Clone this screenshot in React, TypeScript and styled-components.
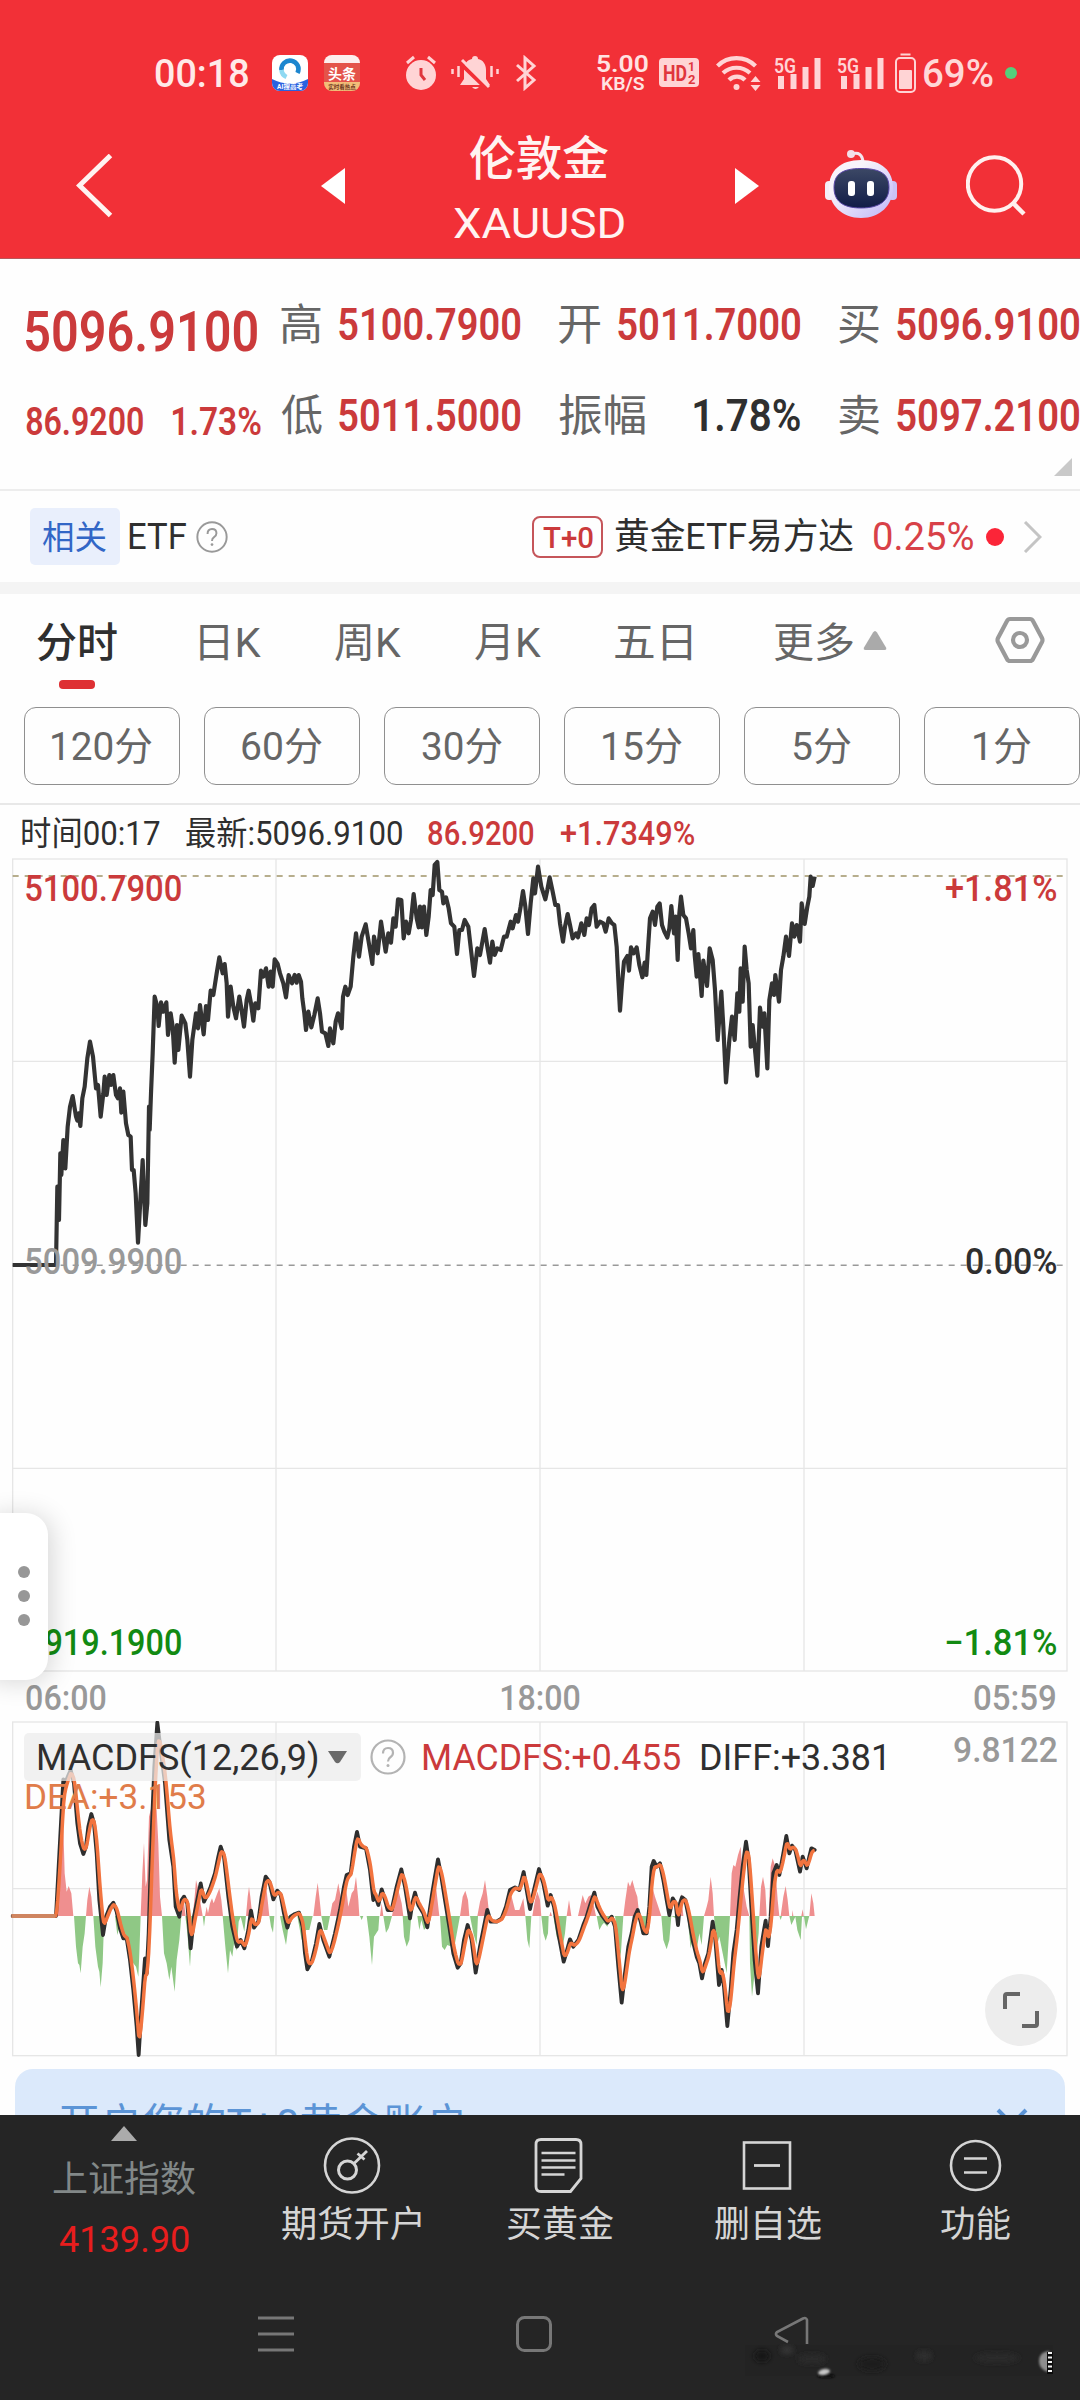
import React, { useLayoutEffect, useRef, useState } from "react";
import styled, { createGlobalStyle } from "styled-components";

const FONT = `Roboto, "Noto Sans CJK SC", sans-serif`;
const RED = "#cb3a3b";
const INK = "#2f2f2f";

const Global = createGlobalStyle`
  * { box-sizing: border-box; }
  body { margin: 0; background: #fff; font-family: ${FONT}; }
  svg { display: block; flex: none; }
`;

/* ---------- text fitted to a column width ---------- */
const FitBox = styled.span<{ $w: number; $size: number; $lh: number; $color: string; $weight: number }>`
  display: block;
  flex: none;
  width: ${(p) => p.$w}px;
  height: ${(p) => p.$lh}px;
  line-height: ${(p) => p.$lh}px;
  font-family: ${FONT};
  font-size: ${(p) => p.$size}px;
  font-weight: ${(p) => p.$weight};
  color: ${(p) => p.$color};
  white-space: pre;
`;
const FitInner = styled.span`
  display: inline-block;
  transform-origin: 0 50%;
`;

type FitProps = { w: number; size: number; lh?: number; color?: string; weight?: number; children: string };

function Fit({ w, size, lh, color = INK, weight = 400, children }: FitProps) {
  const ref = useRef<HTMLSpanElement>(null);
  const [transform, setTransform] = useState("none");
  useLayoutEffect(() => {
    const ctx = document.createElement("canvas").getContext("2d");
    if (!ctx || !ref.current) return;
    ctx.font = `${weight} ${size}px ${FONT}`;
    const m = ctx.measureText(children);
    const scale = w / (m.actualBoundingBoxRight + m.actualBoundingBoxLeft);
    setTransform(`translate(${m.actualBoundingBoxLeft * scale}px, 1px) scaleX(${scale})`);
  }, [w, size, weight, children]);
  return (
    <FitBox $w={w} $size={size} $lh={lh ?? Math.round(size * 1.2)} $color={color} $weight={weight}>
      <FitInner ref={ref} style={{ transform }}>{children}</FitInner>
    </FitBox>
  );
}

/* ---------- page ---------- */
const Page = styled.div`
  width: 1080px;
  height: 2400px;
  display: flex;
  flex-direction: column;
  overflow: hidden;
  background: #fefefe;
`;
const Row = styled.div<{ $gap?: number }>`
  display: flex;
  align-items: center;
  gap: ${(p) => p.$gap ?? 0}px;
`;
const Spacer = styled.div<{ $w: number }>`
  flex: none;
  width: ${(p) => p.$w}px;
`;

/* ---------- header ---------- */
const Header = styled.header`
  flex: none;
  height: 259px;
  background: #f23037;
  border-bottom: 1px solid #b8575a;
`;
const StatusBar = styled.div`
  height: 118px;
  padding: 27px 0 0 155px;
  display: flex;
  align-items: center;
`;
const Speed = styled.div`
  display: flex;
  flex-direction: column;
  align-items: center;
  margin-right: 11px;
`;
const GreenDot = styled.div`
  width: 12px;
  height: 12px;
  margin-left: 12px;
  border-radius: 50%;
  background: #55cf7b;
`;
const TitleBar = styled.div`
  height: 136px;
  padding-left: 76px;
  display: flex;
  align-items: center;
`;
const TitleStack = styled.div`
  width: 170px;
  height: 136px;
  padding-top: 12px;
  display: flex;
  flex-direction: column;
  align-items: center;
  gap: 10px;
`;

const PINK = "#ffd4d5";

const BrowserIcon = () => (
  <svg width="36" height="36" viewBox="0 0 36 36">
    <rect width="36" height="36" rx="8" fill="#fff" />
    <path d="M0 24q18 9 36 0v4a8 8 0 0 1-8 8H8a8 8 0 0 1-8-8z" fill="#2a62e0" />
    <path d="M9.500 15a8.500 8.500 0 1 1 16 3" fill="none" stroke="#1d86cf" strokeWidth="4.600" />
    <path d="M9.500 15a8.500 8.500 0 0 0 5 7" fill="none" stroke="#8fd9f2" strokeWidth="4.600" />
    <text x="18" y="34" fontSize="6.500" fontWeight="700" fill="#fff" textAnchor="middle" fontFamily={FONT}>AI搜高考</text>
  </svg>
);
const NewsIcon = () => (
  <svg width="36" height="36" viewBox="0 0 36 36">
    <rect width="36" height="36" rx="8" fill="#e4534a" />
    <path d="M0 8a8 8 0 0 1 8-8h20a8 8 0 0 1 8 8z" fill="#fdeeee" />
    <path d="M0 27h36v1a8 8 0 0 1-8 8H8a8 8 0 0 1-8-8z" fill="#f2bd78" />
    <text x="18" y="24" fontSize="14" fontWeight="700" fill="#fff" textAnchor="middle" fontFamily={FONT}>头条</text>
    <text x="18" y="34" fontSize="5.500" fontWeight="700" fill="#6b3320" textAnchor="middle" fontFamily={FONT}>实时看热点</text>
  </svg>
);
const AlarmIcon = () => (
  <svg width="32" height="36" viewBox="0 0 32 36">
    <circle cx="16" cy="20" r="15" fill={PINK} />
    <path d="M2 8l7-6M30 8l-7-6" stroke={PINK} strokeWidth="3" />
    <path d="M16 13v7l4 5" fill="none" stroke="#e0363d" strokeWidth="3" />
  </svg>
);
const BellIcon = () => (
  <svg width="48" height="36" viewBox="0 0 48 36">
    <path d="M24 1c2 0 3 1 3 3 5 1 8 5 8 11v9l4 6H9l4-6v-9c0-6 3-10 8-11 0-2 1-3 3-3zM21 32h7q-3.500 4-7 0z" fill={PINK} />
    <path d="M8 7l28 27" stroke="#f23037" strokeWidth="4" />
    <path d="M11 5l27 27" stroke={PINK} strokeWidth="3" />
    <path d="M1.500 14v5M7.500 11v11M40.500 11v11M46.500 14v5" stroke={PINK} strokeWidth="2.500" />
  </svg>
);
const BluetoothIcon = () => (
  <svg width="22" height="36" viewBox="0 0 22 36">
    <path d="M2 10l17 15-9 8V3l9 8L2 26" fill="none" stroke={PINK} strokeWidth="3" />
  </svg>
);
const HdIcon = () => (
  <svg width="40" height="29" viewBox="0 0 40 29">
    <rect width="40" height="29" rx="4" fill={PINK} />
    <text x="4" y="22.500" fontSize="22" fontWeight="700" fill="#e0363d" fontFamily={FONT} textLength="24" lengthAdjust="spacingAndGlyphs">HD</text>
    <text x="29" y="13" fontSize="12" fontWeight="700" fill="#e0363d" fontFamily={FONT}>1</text>
    <text x="29" y="25.500" fontSize="13" fontWeight="700" fill="#e0363d" fontFamily={FONT}>2</text>
  </svg>
);
const WifiIcon = () => (
  <svg width="46" height="36" viewBox="0 0 46 36">
    <g fill="none" stroke={PINK} strokeWidth="4.200">
      <path d="M1.500 11a27 27 0 0 1 38 0" />
      <path d="M7 18a20 20 0 0 1 27 0" />
      <path d="M13 25a11 11 0 0 1 16 0" />
    </g>
    <circle cx="20.500" cy="32" r="3" fill={PINK} />
    <path d="M39.500 21l5 6h-10zM39.500 36l5-6h-10z" fill={PINK} />
  </svg>
);
const SignalSvg = styled.svg`
  overflow: visible;
`;
const SignalIcon = () => (
  <SignalSvg width="47" height="36" viewBox="0 0 47 36">
    <text x="0" y="17.500" fontSize="21" fontWeight="600" fill={PINK} fontFamily={FONT} textLength="22" lengthAdjust="spacingAndGlyphs">5G</text>
    <path d="M7 21v13M19.500 19v15M31.500 12v22M43.500 3v31" stroke={PINK} strokeWidth="6" />
  </SignalSvg>
);
const BatteryIcon = () => (
  <svg width="21" height="40" viewBox="0 0 21 40">
    <path d="M5.500 1.500h10" stroke={PINK} strokeWidth="2" />
    <rect x="1" y="5" width="19" height="34" rx="4" fill="none" stroke={PINK} strokeWidth="2" />
    <rect x="4" y="17" width="13" height="19" rx="1" fill={PINK} />
  </svg>
);
const BackIcon = () => (
  <svg width="37" height="64" viewBox="0 0 37 64">
    <path d="M34.500 1.500L3.500 31.500l31 30" fill="none" stroke="#fff3f1" strokeWidth="5" />
  </svg>
);
const PrevIcon = () => (
  <svg width="24" height="36" viewBox="0 0 24 36"><path d="M24 0v36L0 18z" fill="#fff" /></svg>
);
const NextIcon = () => (
  <svg width="24" height="36" viewBox="0 0 24 36"><path d="M0 0v36l24-18z" fill="#fff" /></svg>
);
const RobotIcon = () => (
  <svg width="72" height="74" viewBox="0 0 72 74">
    <defs>
      <linearGradient id="shell" x1="0" y1="0" x2="1" y2="1">
        <stop offset="0.300" stopColor="#f8f4fb" />
        <stop offset="1" stopColor="#bdb4f7" />
      </linearGradient>
      <linearGradient id="visor" x1="0" y1="0" x2="0" y2="1">
        <stop offset="0" stopColor="#3c4865" />
        <stop offset="1" stopColor="#111c48" />
      </linearGradient>
    </defs>
    <path d="M27 5q10-3 11 8" fill="none" stroke="#f3e6ee" strokeWidth="3" />
    <circle cx="26" cy="5" r="4" fill="#f3dfe8" />
    <rect x="0" y="32" width="9" height="19" rx="4" fill="#f4eef8" />
    <rect x="63" y="32" width="9" height="19" rx="4" fill="#cbc3f5" />
    <path d="M36 11c21 0 32 11 32 28S55 69 36 69 4 56 4 39 15 11 36 11z" fill="url(#shell)" />
    <path d="M36 19.500c20 0 28 6 28 19s-9 20.500-28 20.500S9 51.500 9 38.500s8-19 27-19z" fill="url(#visor)" stroke="#5948a8" strokeWidth="1" />
    <rect x="23" y="32" width="7" height="15" rx="3" fill="#fff" />
    <rect x="42" y="32" width="7" height="15" rx="3" fill="#fff" />
  </svg>
);
const SearchIcon = () => (
  <svg width="60" height="64" viewBox="0 0 60 64">
    <circle cx="28.500" cy="30" r="26.700" fill="none" stroke="#fff0ee" strokeWidth="4" />
    <path d="M47 49l11 11" stroke="#fff0ee" strokeWidth="4.500" />
  </svg>
);

/* ---------- quote ---------- */
const Quote = styled.section`
  flex: none;
  height: 232px;
  padding: 39px 0 0 26px;
  display: flex;
  border-bottom: 2px solid #ededed;
  position: relative;
`;
const PriceCol = styled.div`
  flex: none;
  width: 255px;
  display: flex;
  flex-direction: column;
  gap: 34px;
`;
const StatCol = styled.div<{ $w: number }>`
  flex: none;
  width: ${(p) => p.$w}px;
  margin-right: 39px;
  display: flex;
  flex-direction: column;
  gap: 39px;
`;
const StatRow = styled.div`
  height: 52px;
  display: flex;
  align-items: center;
  justify-content: space-between;
`;
const Corner = styled.div`
  position: absolute;
  right: 8px;
  bottom: 13px;
  border-left: 18px solid transparent;
  border-bottom: 18px solid #c9c9c9;
`;

/* ---------- related ---------- */
const Related = styled.section`
  flex: none;
  height: 103px;
  padding: 0 38px 0 30px;
  display: flex;
  align-items: center;
  border-bottom: 12px solid #f4f4f4;
`;
const BlueTag = styled.div`
  width: 90px;
  height: 57px;
  margin-right: 9px;
  padding-left: 12px;
  border-radius: 5px;
  background: #e9effc;
  display: flex;
  align-items: center;
`;
const TTag = styled.div`
  width: 71px;
  height: 42px;
  margin: 0 12px 0 auto;
  border: 2px solid #c5555a;
  border-radius: 8px;
  display: flex;
  align-items: center;
  justify-content: center;
`;
const RedDot = styled.div`
  width: 18px;
  height: 18px;
  margin: 0 19px 0 13px;
  border-radius: 50%;
  background: #fb2538;
`;
const HelpIcon = ({ size, stroke }: { size: number; stroke: string }) => (
  <svg width={size} height={size} viewBox="0 0 36 36">
    <circle cx="18" cy="18" r="16.500" fill="none" stroke={stroke} strokeWidth="2.200" />
    <path d="M13 14.500q0-5.500 5-5.500t5 4.800q0 2.700-2.700 4.400Q18 19.700 18 22.500" fill="none" stroke={stroke} strokeWidth="2.200" />
    <circle cx="18" cy="26.500" r="1.500" fill={stroke} />
  </svg>
);

/* ---------- tabs ---------- */
const Tabs = styled.nav`
  flex: none;
  height: 113px;
  padding: 0 35px 0 37px;
  display: flex;
  align-items: flex-start;
`;
const Tab = styled.div<{ $ml: number }>`
  margin-left: ${(p) => p.$ml}px;
  padding-top: 24px;
  display: flex;
  flex-direction: column;
  align-items: center;
  gap: 13px;
`;
const Underline = styled.div`
  width: 36px;
  height: 9px;
  border-radius: 4px;
  background: #de3033;
`;
const TabIcon = styled.div<{ $ml: number; $mt: number }>`
  margin: ${(p) => p.$mt}px 0 0 ${(p) => p.$ml}px;
`;
const Chips = styled.div`
  flex: none;
  height: 98px;
  padding-left: 24px;
  display: flex;
  gap: 24px;
  border-bottom: 2px solid #e8e8e8;
`;
const Chip = styled.div`
  flex: none;
  width: 156px;
  height: 78px;
  border: 1px solid #8f8f8f;
  border-radius: 12px;
  display: flex;
  align-items: center;
  justify-content: center;
`;
const InfoRow = styled.div`
  flex: none;
  height: 53px;
  padding: 3px 0 0 22px;
  display: flex;
  align-items: center;
`;

/* ---------- charts ---------- */
const PriceChart = styled.section`
  flex: none;
  height: 814px;
  display: grid;
`;
const ChartSvg = styled.svg`
  grid-area: 1 / 1;
`;
const PriceLabels = styled.div`
  grid-area: 1 / 1;
  height: 814px;
  padding: 9px 24px 8px 26px;
  display: flex;
  flex-direction: column;
  justify-content: space-between;
`;
const LabelRow = styled.div<{ $pb?: number }>`
  padding-bottom: ${(p) => p.$pb ?? 0}px;
  display: flex;
  justify-content: space-between;
  align-items: center;
`;
const TimeRow = styled.div`
  flex: none;
  height: 49px;
  padding: 3px 25px 0 26px;
  display: flex;
  align-items: center;
  justify-content: space-between;
`;
const ChartArea = styled.div`
  flex: none;
  position: relative;
`;
const Handle = styled.div`
  position: absolute;
  left: -20px;
  top: 655px;
  width: 68px;
  height: 167px;
  padding: 0 0 2px 20px;
  border-radius: 22px;
  background: #fff;
  box-shadow: 4px 2px 26px rgba(0, 0, 0, 0.16);
  display: flex;
  flex-direction: column;
  align-items: center;
  justify-content: center;
  gap: 12px;
  span {
    width: 12px;
    height: 12px;
    border-radius: 50%;
    background: #979797;
  }
`;
const Macd = styled.section`
  flex: none;
  height: 348px;
  display: grid;
`;
const MacdLabels = styled.div`
  grid-area: 1 / 1;
  height: 336px;
  padding: 12px 23px 0 24px;
  display: flex;
  flex-direction: column;
`;
const Indicator = styled.div`
  width: 337px;
  height: 48px;
  margin-right: 9px;
  padding: 0 14px;
  border-radius: 5px;
  background: rgba(236, 236, 236, 0.72);
  display: flex;
  align-items: center;
  justify-content: space-between;
`;
const LastValue = styled.div`
  margin-left: auto;
  align-self: flex-start;
`;
const Expand = styled.div`
  width: 72px;
  height: 72px;
  margin: auto 0 11px auto;
  border-radius: 50%;
  background: #ededed;
  display: flex;
  align-items: center;
  justify-content: center;
`;

type Pt = [number, number];
const parse = (s: string): Pt[] =>
  s.trim().split(/\s+/).map((p) => p.split(",").map(Number) as Pt);
const shift = (pts: Pt[], dx: number): Pt[] => pts.map(([x, y]) => [x + dx, y]);
const join = (pts: Pt[]) => pts.map((p) => p.join(",")).join(" ");

const PRICE: Pt[] = [
  ...parse(`38,1275 168,1275 172,1040 177,1140 181,940 184,1005 190,900 196,985 203,860 210,800 218,768 228,830 232,842 236,820 241,858 247,775 254,740 262,655 270,605 279,650 288,745 294,735 302,830 310,760 314,710 320,765 328,705 333,735 340,705 348,765 354,775 360,745 364,818 370,755 378,850 385,885 392,890 396,990 401,990 407,1060 414,1208 420,1100 428,960 436,1155 442,1090 447,800 449,870 453,760 458,640 464,470 472,500 476,558 483,487 490,515 499,487 504,585 512,520 518,560 524,668 531,555 535,630 545,527 556,550 562,600 570,710 577,600 588,520 594,565 600,495 611,583 618,498 624,540 632,452 640,465 650,400 658,352 668,400 674,372 680,430 684,530 692,440 700,500 708,535 718,470 724,505 732,560 740,480 746,452 753,490 760,542 766,490 775,505 783,392 790,410 798,385 806,440 812,395 818,440 824,358 833,372 840,400 850,430 858,472 866,405 876,430 884,405 890,428 896,405 903,425 907,475 913,520 918,570 925,515 934,562 943,525 953,475 960,520 966,575 976,580 985,618 990,565 1000,610 1007,545 1014,520 1025,565 1029,470 1036,440 1043,465 1052,440 1060,350 1068,280 1077,350 1085,290 1097,253 1105,300 1117,372 1122,290 1133,340 1143,245 1150,290 1157,335 1165,280 1173,308 1180,235 1187,260 1194,178 1204,180 1211,295 1218,245 1226,280 1233,240 1241,162 1250,235 1256,262`),
  ...shift(parse(`60,200 66,262 72,200 79,285 86,230 92,150 98,165 104,75 112,66 118,150 126,155 130,190 138,172 146,205 153,250 163,260 171,342 178,270 186,270 194,240 205,260 213,330 222,408 232,325 240,345 254,267 262,320 270,368 277,305 284,345 292,325 302,330 312,290 320,290 332,245 338,265 348,225 354,245 362,200 369,153 376,200 384,282 392,190 400,115 405,160 414,80 424,140 436,178 442,150 449,112 457,150 466,195 474,195 480,250 489,305 495,260 503,222 510,255 518,295 528,280 534,292 544,250 553,285 560,235 567,255 575,205 583,195 590,260 600,245 610,250 617,275 626,235 636,250 643,255 650,320 655,420 660,512 666,430 672,365 682,348 687,392 693,322 701,340 710,322 718,375 727,412 734,368 739,405 745,310 750,235 758,215 765,255 772,200 779,190 786,255 793,275 802,293 808,265 814,198 822,280 827,230 833,360 838,220 843,170 850,225 858,235 866,280 873,325 880,270 884,345 890,410 895,342 905,468 910,362 921,438 929,325 938,360 945,450 953,600 964,455 970,560 978,727 988,600 996,530 1004,600 1012,460 1018,515 1022,385 1028,485 1034,320 1040,390 1046,430 1052,620 1058,555 1066,640 1072,707 1080,503 1088,560 1093,520 1102,685 1108,480 1116,430 1122,465 1126,405 1137,485 1143,390 1150,350 1158,290 1167,348 1176,250 1183,290 1190,255 1200,305 1205,190 1214,252 1222,200 1228,170 1232,110 1238,138 1244,110`), 1200),
];

const DIFF: Pt[] = [
  ...parse(`38,648 168,648 176,500 190,238 197,245 212,210 222,250 232,370 240,430 250,462 258,440 265,380 274,342 282,370 290,460 298,600 309,705 318,650 330,620 340,608 350,635 360,685 370,715 380,715 390,780 400,870 410,980 416,1065 424,930 435,775 440,820 446,700 455,400 463,200 472,68 482,150 495,250 508,420 520,500 527,620 538,650 545,600 552,590 562,610 572,745 582,650 592,600 602,550 612,605 622,585 632,560 645,520 655,470 662,440 672,470 685,590 697,680 711,740 722,720 733,745 745,690 753,632 762,683 775,665 785,590 797,530 808,545 820,598 832,572 842,585 852,640 862,683 872,650 885,642 897,638 908,680 915,760 922,808 935,785 948,730 958,672 970,720 988,770 1005,700 1020,630 1032,560 1040,525 1052,520 1062,440 1071,396 1080,440 1098,445 1110,510 1120,600 1127,590 1135,615 1145,568 1155,600 1163,630 1175,630 1190,560 1204,508 1215,560 1230,655 1237,610`),
  ...shift(parse(`45,578 55,615 70,640 82,682 95,590 105,530 114,478 124,530 135,600 148,680 160,760 173,803 182,790 192,720 203,675 215,720 227,818 240,740 250,690 262,630 272,665 290,665 305,655 318,620 330,570 345,562 358,570 371,516 380,570 390,627 402,570 417,507 430,550 443,617 452,585 462,620 475,700 491,785 500,755 510,718 520,740 535,720 550,675 560,650 572,610 583,578 592,620 605,645 622,668 635,650 645,680 655,800 665,908 675,820 685,740 695,700 704,650 713,630 722,665 730,700 740,700 748,620 755,500 761,483 770,500 780,490 790,540 800,600 808,645 818,595 827,610 834,675 840,610 846,592 856,600 866,650 878,720 890,770 898,790 906,835 915,790 925,760 932,710 938,665 946,720 957,855 965,810 972,860 982,978 992,870 1000,760 1010,690 1018,600 1028,500 1038,425 1046,480 1054,620 1064,780 1074,880 1084,740 1092,690 1097,662 1104,738 1112,650 1120,520 1130,495 1138,525 1150,460 1159,408 1168,460 1176,437 1186,450 1200,515 1208,470 1220,505 1228,470 1234,445 1244,450`), 1200),
];

/* signal line: exponential average of DIFF */
function ema(pts: Pt[], step: number, alpha: number): Pt[] {
  const out: Pt[] = [];
  let i = 0;
  let v = pts[0][1];
  const last = pts[pts.length - 1][0];
  for (let x = pts[0][0]; x <= last; x += step) {
    while (i < pts.length - 2 && pts[i + 1][0] < x) i++;
    const [x0, y0] = pts[i];
    const [x1, y1] = pts[i + 1];
    const y = y0 + ((y1 - y0) * (x - x0)) / (x1 - x0);
    v += alpha * (y - v);
    out.push([x, Math.round(v * 10) / 10]);
  }
  return out;
}
const DEA = ema(DIFF, 3, 0.4);

const BARS_UP: Pt[] = [
  ...parse(`168,648 178,560 186,440 190,380 194,520 200,575 206,558 214,580 220,648 258,648 262,600 268,560 274,590 279,648 422,648 427,520 432,428 437,560 441,540 447,350 452,330 462,300 470,330 475,430 480,590 486,648 545,648 550,590 557,648 578,648 584,590 588,540 593,560 600,600 608,648 615,648 620,620 624,640 630,610 636,595 641,610 650,585 658,565 664,600 669,648 738,648 743,590 747,560 751,590 757,648 780,648 790,580 797,545 803,600 808,648 940,648 947,590 953,548 958,590 964,648 990,648 997,610 1005,600 1015,550 1022,590 1030,600 1037,550 1045,620 1055,580 1062,570 1068,530 1075,600 1078,648 1140,648 1145,610 1150,648 1176,648 1185,600 1195,570 1205,610 1210,648`),
  ...shift(parse(`85,648 100,600 108,560 118,648 180,648 188,590 196,572 204,600 208,648 232,648 240,605 248,580 255,540 262,590 268,648 310,648 325,590 335,590 345,630 358,630 370,595 376,648 397,648 405,600 412,575 420,600 424,648 448,648 452,635 456,648 500,648 507,600 514,648 534,648 548,585 556,610 565,590 572,585 580,610 588,648 670,648 676,600 684,545 690,560 697,540 705,570 712,590 718,648 750,648 757,560 765,590 775,620 784,648 838,648 844,580 850,648 912,648 920,620 925,600 932,530 938,580 942,648 990,648 995,520 1000,495 1006,500 1014,465 1022,440 1030,560 1040,620 1048,648 1078,648 1083,560 1089,530 1096,570 1100,648 1106,648 1112,500 1118,475 1126,500 1133,600 1138,648 1142,648 1150,590 1157,558 1163,600 1168,648 1176,648 1178,630 1180,648 1204,648 1208,628 1211,648 1228,648 1234,580 1240,610 1244,648`), 1200),
];
const BARS_DOWN: Pt[] = [
  ...parse(`222,648 228,740 234,790 238,795 242,820 248,740 254,700 258,648 280,648 286,740 294,800 298,815 302,862 308,790 311,700 318,648 345,648 352,705 358,680 365,715 375,700 390,760 400,790 408,800 415,830 418,760 422,648 486,648 492,760 500,790 508,840 514,800 524,875 530,780 538,720 544,648 556,648 562,700 570,800 576,700 582,648 608,648 612,680 616,648 668,648 676,740 684,820 690,750 697,770 702,730 710,752 716,665 722,650 726,665 733,695 738,648 808,648 813,680 819,698 823,648 840,648 848,690 858,735 864,690 868,648 892,648 905,720 918,690 928,690 938,648 964,648 972,690 982,690 990,648 1080,648 1085,660 1090,648 1100,648 1108,710 1116,795 1122,710 1135,690 1138,648 1150,648 1158,698 1166,685 1176,648`),
  ...shift(parse(`8,648 12,710 20,740 28,720 34,648 52,648 58,690 64,660 72,690 80,680 88,648 120,648 126,740 134,750 142,735 155,740 165,730 180,648 210,648 220,700 230,735 234,648 376,648 382,720 388,745 394,648 424,648 430,700 437,722 444,700 446,648 460,648 470,710 480,735 488,740 495,700 500,648 590,648 598,690 606,675 612,668 622,680 630,655 645,648 652,700 662,770 670,648 724,648 732,690 740,700 746,648 784,648 790,720 800,748 808,720 814,648 828,655 834,670 838,648 862,648 872,745 880,710 890,750 898,700 905,735 912,648 942,648 950,740 958,710 968,760 980,820 990,648 1048,648 1050,790 1056,890 1066,800 1076,700 1078,648 1138,648 1142,660 1146,648 1168,648 1174,675 1186,650 1192,690 1202,720 1206,650 1212,650 1218,688 1226,655 1228,648`), 1200),
];

/* ---------- bottom ---------- */
const Banner = styled.section`
  flex: none;
  width: 1050px;
  height: 46px;
  margin-left: 15px;
  padding: 30px 37px 0 45px;
  border-radius: 18px 18px 0 0;
  background: #dbe9fb;
  display: flex;
  align-items: flex-start;
  justify-content: space-between;
  overflow: hidden;
`;
const CloseIcon = styled.svg`
  margin-top: 8px;
`;
const Bottom = styled.footer`
  flex: none;
  height: 285px;
  background: #252525;
  position: relative;
`;
const Actions = styled.div`
  height: 184px;
  padding-left: 53px;
  display: flex;
  align-items: flex-start;
`;
const IndexCell = styled.div`
  width: 142px;
  padding-top: 11px;
  display: flex;
  flex-direction: column;
  align-items: center;
  gap: 17px;
`;
const Action = styled.div<{ $ml: number }>`
  margin-left: ${(p) => p.$ml}px;
  padding-top: 21px;
  display: flex;
  flex-direction: column;
  align-items: center;
  gap: 7px;
`;
const SystemNav = styled.div`
  height: 70px;
  padding: 0 0 0 258px;
  display: flex;
  align-items: center;
`;
const Smudge = styled.svg`
  position: absolute;
  left: 742px;
  top: 229px;
`;

const LINE = "#d5d5d5";
const KeyIcon = () => (
  <svg width="60" height="60" viewBox="0 0 60 60">
    <circle cx="30" cy="29.500" r="27" fill="none" stroke={LINE} strokeWidth="2.600" />
    <circle cx="25.500" cy="34" r="9" fill="none" stroke={LINE} strokeWidth="3" />
    <path d="M32 27.500L45 15M35.500 17.500l7 6" fill="none" stroke={LINE} strokeWidth="2.800" />
  </svg>
);
const DocIcon = () => (
  <svg width="60" height="60" viewBox="-1 0 60 60">
    <path d="M10 3.500h35q5 0 5 5v34L39.500 55.500H10q-5 0-5-5v-42q0-5 5-5z" fill="none" stroke={LINE} strokeWidth="2.800" />
    <path d="M10.500 17h34M10.500 24.500h34M10.500 31.500h34M10.500 38.500h23" stroke={LINE} strokeWidth="2.600" />
  </svg>
);
const MinusIcon = () => (
  <svg width="60" height="60" viewBox="0 0 60 60">
    <rect x="6" y="6.500" width="46" height="46" fill="none" stroke={LINE} strokeWidth="2.600" />
    <path d="M16 29.500h26" stroke={LINE} strokeWidth="2.800" />
  </svg>
);
const EqualIcon = () => (
  <svg width="60" height="60" viewBox="0 0 60 60">
    <circle cx="29.500" cy="29.500" r="24.500" fill="none" stroke={LINE} strokeWidth="2.600" />
    <path d="M18 22.500h23M18 36.500h23" stroke={LINE} strokeWidth="2.600" />
  </svg>
);

const chips: [string, number][] = [
  ["120分", 100], ["60分", 80], ["30分", 80], ["15分", 79], ["5分", 58], ["1分", 57],
];
const tabs: [string, number, number][] = [
  ["日K", 61, 83], ["周K", 66, 74], ["月K", 66, 74], ["五日", 77, 74], ["更多", 79, 82],
];

export default function App() {
  return (
    <Page>
      <Global />
      <Header>
        <StatusBar>
          <Fit w={93} size={38} weight={500} color="#ffe9e8">00:18</Fit>
          <Spacer $w={24} />
          <BrowserIcon />
          <Spacer $w={16} />
          <NewsIcon />
          <Spacer $w={45} />
          <AlarmIcon />
          <Spacer $w={14} />
          <BellIcon />
          <Spacer $w={16} />
          <BluetoothIcon />
          <Spacer $w={60} />
          <Speed>
            <Fit w={51} size={24} lh={21} weight={600} color="#ffe3e2">5.00</Fit>
            <Fit w={42} size={19} lh={18} weight={600} color="#ffe3e2">KB/S</Fit>
          </Speed>
          <HdIcon />
          <Spacer $w={17} />
          <WifiIcon />
          <Spacer $w={12} />
          <SignalIcon />
          <Spacer $w={16} />
          <SignalIcon />
          <Spacer $w={11} />
          <BatteryIcon />
          <Spacer $w={8} />
          <Fit w={69} size={38} weight={500} color="#ffd8d8">69%</Fit>
          <GreenDot />
        </StatusBar>
        <TitleBar>
          <BackIcon />
          <Spacer $w={208} />
          <PrevIcon />
          <Spacer $w={109} />
          <TitleStack>
            <Fit w={138} size={47} weight={500} color="#fff3f1">伦敦金</Fit>
            <Fit w={170} size={43} color="#fff3f1">XAUUSD</Fit>
          </TitleStack>
          <Spacer $w={111} />
          <NextIcon />
          <Spacer $w={66} />
          <RobotIcon />
          <Spacer $w={69} />
          <SearchIcon />
        </TitleBar>
      </Header>

      <Quote>
        <PriceCol>
          <Fit w={231} size={55} weight={600} color={RED}>5096.9100</Fit>
          <Row $gap={30}>
            <Fit w={117} size={38} weight={600} color={RED}>86.9200</Fit>
            <Fit w={88} size={38} weight={600} color={RED}>1.73%</Fit>
          </Row>
        </PriceCol>
        <StatCol $w={239}>
          <StatRow>
            <Fit w={40} size={43} color="#666">高</Fit>
            <Fit w={181} size={44} weight={600} color={RED}>5100.7900</Fit>
          </StatRow>
          <StatRow>
            <Fit w={41} size={43} color="#666">低</Fit>
            <Fit w={181} size={44} weight={600} color={RED}>5011.5000</Fit>
          </StatRow>
        </StatCol>
        <StatCol $w={241}>
          <StatRow>
            <Fit w={41} size={43} color="#666">开</Fit>
            <Fit w={182} size={44} weight={600} color={RED}>5011.7000</Fit>
          </StatRow>
          <StatRow>
            <Fit w={86} size={43} color="#666">振幅</Fit>
            <Fit w={106} size={44} weight={600}>1.78%</Fit>
          </StatRow>
        </StatCol>
        <StatCol $w={240}>
          <StatRow>
            <Fit w={40} size={43} color="#666">买</Fit>
            <Fit w={182} size={44} weight={600} color={RED}>5096.9100</Fit>
          </StatRow>
          <StatRow>
            <Fit w={40} size={43} color="#666">卖</Fit>
            <Fit w={182} size={44} weight={600} color={RED}>5097.2100</Fit>
          </StatRow>
        </StatCol>
        <Corner />
      </Quote>

      <Related>
        <BlueTag><Fit w={64} size={33} color="#3266c6">相关</Fit></BlueTag>
        <Fit w={57} size={36}>ETF</Fit>
        <Spacer $w={10} />
        <HelpIcon size={32} stroke="#999" />
        <TTag><Fit w={50} size={30} weight={500} color={RED}>T+0</Fit></TTag>
        <Fit w={238} size={36}>黄金ETF易方达</Fit>
        <Spacer $w={21} />
        <Fit w={99} size={39} lh={51} color="#d84148">0.25%</Fit>
        <RedDot />
        <svg width="19" height="32" viewBox="0 0 19 32">
          <path d="M2 1l15 15L2 31" fill="none" stroke="#c4c4c4" strokeWidth="3" />
        </svg>
      </Related>

      <Tabs>
        <Tab $ml={0}>
          <Fit w={80} size={41} weight={500}>分时</Fit>
          <Underline />
        </Tab>
        {tabs.map(([label, w, ml]) => (
          <Tab $ml={ml} key={label}><Fit w={w} size={41} color="#666">{label}</Fit></Tab>
        ))}
        <TabIcon $ml={10} $mt={37}>
          <svg width="24" height="20" viewBox="0 0 24 20"><path d="M12 0q1 0 2 1.500l9 15q1 2.500-1.500 2.500h-19Q0 19 1 16.500l9-15Q11 0 12 0z" fill="#aaa" /></svg>
        </TabIcon>
        <TabIcon $ml={108} $mt={22}>
          <svg width="50" height="48" viewBox="0 0 50 48">
            <path d="M15 3h20q2 0 3 2l9 17q1 2 0 4l-9 17q-1 2-3 2H15q-2 0-3-2L3 26q-1-2 0-4L12 5q1-2 3-2z" fill="none" stroke="#999" strokeWidth="4.200" />
            <circle cx="25" cy="24" r="7" fill="none" stroke="#999" strokeWidth="4.200" />
          </svg>
        </TabIcon>
      </Tabs>
      <Chips>
        {chips.map(([label, w]) => (
          <Chip key={label}><Fit w={w} size={39} color="#666">{label}</Fit></Chip>
        ))}
      </Chips>
      <InfoRow>
        <Fit w={138} size={33}>时间00:17</Fit>
        <Spacer $w={26} />
        <Fit w={216} size={33}>最新:5096.9100</Fit>
        <Spacer $w={26} />
        <Fit w={106} size={33} weight={500} color={RED}>86.9200</Fit>
        <Spacer $w={27} />
        <Fit w={133} size={33} weight={500} color={RED}>+1.7349%</Fit>
      </InfoRow>

      <ChartArea>
        <PriceChart>
          <ChartSvg width="1080" height="814" viewBox="0 54 3240 2442">
            <g fill="none" stroke="#e6e6e6" strokeWidth="4">
              <rect x="38" y="57" width="3163" height="2436" />
              <path d="M828 57V2493M1620 57V2493M2412 57V2493M38 664H3201M38 1885H3201" />
            </g>
            <path d="M38 108H3201" stroke="#a09468" strokeWidth="4.500" strokeDasharray="18 18" />
            <path d="M38 1276H3201" stroke="#999" strokeWidth="4.500" strokeDasharray="18 18" />
            <polyline points={join(PRICE)} fill="none" stroke="#333" strokeWidth="12.500" strokeLinejoin="round" />
          </ChartSvg>
          <PriceLabels>
            <LabelRow>
              <Fit w={155} size={36} weight={500} color={RED}>5100.7900</Fit>
              <Fit w={110} size={36} weight={500} color={RED}>+1.81%</Fit>
            </LabelRow>
            <LabelRow $pb={8}>
              <Fit w={155} size={36} weight={500} color="#999">5009.9900</Fit>
              <Fit w={90} size={36} weight={500}>0.00%</Fit>
            </LabelRow>
            <LabelRow>
              <Fit w={155} size={36} weight={500} color="#128a12">4919.1900</Fit>
              <Fit w={110} size={36} weight={500} color="#128a12">−1.81%</Fit>
            </LabelRow>
          </PriceLabels>
        </PriceChart>
        <TimeRow>
          <Fit w={80} size={35} weight={500} color="#999">06:00</Fit>
          <Fit w={79} size={35} weight={500} color="#999">18:00</Fit>
          <Fit w={81} size={35} weight={500} color="#999">05:59</Fit>
        </TimeRow>
        <Handle><span /><span /><span /></Handle>
      </ChartArea>

      <Macd>
        <ChartSvg width="1080" height="336" viewBox="0 63 3240 1008">
          <g fill="none" stroke="#e6e6e6" strokeWidth="4">
            <rect x="38" y="66" width="3163" height="1001" />
            <path d="M828 66V1067M1620 66V1067M2412 66V1067M38 566H3201" />
          </g>
          <polygon points={`168,648 ${join(BARS_UP)}`} fill="#ef8f8f" />
          <polygon points={`168,648 ${join(BARS_DOWN)}`} fill="#8fc885" />
          <polyline points={join(DIFF)} fill="none" stroke="#2e2e2e" strokeWidth="11.500" strokeLinejoin="round" strokeLinecap="round" />
          <polyline points={join(DEA)} fill="none" stroke="#f2743f" strokeWidth="10.500" strokeLinejoin="round" />
          <path d="M34 648H166" stroke="#cf8560" strokeWidth="12" />
        </ChartSvg>
        <MacdLabels>
          <Row>
            <Indicator>
              <Fit w={279} size={36}>MACDFS(12,26,9)</Fit>
              <svg width="19" height="13" viewBox="0 0 19 13"><path d="M0 0h19l-7 11q-2.500 2.500-5 0z" fill="#6a6a6a" /></svg>
            </Indicator>
            <HelpIcon size={36} stroke="#b3b3b3" />
            <Spacer $w={17} />
            <Fit w={257} size={36} color={RED}>MACDFS:+0.455</Fit>
            <Spacer $w={21} />
            <Fit w={183} size={36}>DIFF:+3.381</Fit>
            <LastValue><Fit w={103} size={35} lh={34} weight={500} color="#999">9.8122</Fit></LastValue>
          </Row>
          <Row><Spacer $w={2} /><Fit w={179} size={35} lh={32} color="#e07c4a">DEA:+3.153</Fit></Row>
          <Expand>
            <svg width="38" height="38" viewBox="0 0 38 38">
              <path d="M3 18V5q0-2 2-2h13M35 20v13q0 2-2 2H20" fill="none" stroke="#666" strokeWidth="4" />
            </svg>
          </Expand>
        </MacdLabels>
      </Macd>

      <Banner>
        <Fit w={402} size={42} color="#5b94d6">开户您的T+0黄金账户</Fit>
        <CloseIcon width="32" height="32" viewBox="0 0 32 32">
          <path d="M2 3l28 28M30 3L2 31" stroke="#5b94d6" strokeWidth="4" />
        </CloseIcon>
      </Banner>

      <Bottom>
        <Actions>
          <IndexCell>
            <svg width="26" height="15" viewBox="0 0 26 15"><path d="M13 0l13 15H0z" fill="#ababab" /></svg>
            <Fit w={142} size={36} color="#828888">上证指数</Fit>
            <Fit w={130} size={36} color="#e81d1d">4139.90</Fit>
          </IndexCell>
          <Action $ml={87}><KeyIcon /><Fit w={139} size={36} color={LINE}>期货开户</Fit></Action>
          <Action $ml={86}><DocIcon /><Fit w={106} size={36} color={LINE}>买黄金</Fit></Action>
          <Action $ml={102}><MinusIcon /><Fit w={106} size={36} color={LINE}>删自选</Fit></Action>
          <Action $ml={120}><EqualIcon /><Fit w={69} size={36} color={LINE}>功能</Fit></Action>
        </Actions>
        <SystemNav>
          <svg width="36" height="38" viewBox="0 0 36 38"><path d="M0 3h36M0 19h36M0 35h36" stroke="#777" strokeWidth="3" /></svg>
          <Spacer $w={222} />
          <svg width="36" height="38" viewBox="0 0 36 38"><rect x="1.500" y="2.500" width="33" height="33" rx="7" fill="none" stroke="#777" strokeWidth="3" /></svg>
          <Spacer $w={222} />
          <svg width="36" height="38" viewBox="0 0 36 38"><path d="M33 29V5q-1-3-4-1.500L3 17q-2 2 0 4l11 6" fill="none" stroke="#777" strokeWidth="2.600" /></svg>
        </SystemNav>
        <Smudge width="320" height="36" viewBox="0 0 320 36">
          <defs>
            <filter id="soft" x="-20%" y="-40%" width="140%" height="180%"><feGaussianBlur stdDeviation="2.500" /></filter>
            <filter id="soft2" x="-30%" y="-30%" width="160%" height="160%"><feGaussianBlur stdDeviation="1" /></filter>
          </defs>
          <rect x="3" y="1" width="308" height="31" fill="#232323" />
          <g filter="url(#soft)">
            <ellipse cx="20" cy="12" rx="8" ry="6" fill="#191919" />
            <ellipse cx="45" cy="6" rx="7" ry="4" fill="#363636" />
            <ellipse cx="70" cy="15" rx="14" ry="5" fill="#2b2b2b" />
            <ellipse cx="130" cy="20" rx="14" ry="7" fill="#1e1e1e" />
            <ellipse cx="182" cy="12" rx="8" ry="5" fill="#2d2d2d" />
            <ellipse cx="255" cy="14" rx="22" ry="5" fill="#2a2a2a" />
          </g>
          <ellipse cx="84" cy="32" rx="9" ry="2" fill="#0a0a0a" filter="url(#soft2)" />
          <ellipse cx="82" cy="28" rx="6" ry="3" fill="#c8c8c8" filter="url(#soft2)" transform="rotate(-12 82 28)" />
          <path d="M307 7q-10 1-10 10t10 11z" fill="#8d8d8d" filter="url(#soft2)" />
          <path d="M308 8v22" stroke="#0a0a0a" strokeWidth="6" />
          <path d="M308 8v22" stroke="#f2f2f2" strokeWidth="4" strokeDasharray="2 2.500" />
        </Smudge>
      </Bottom>
    </Page>
  );
}
